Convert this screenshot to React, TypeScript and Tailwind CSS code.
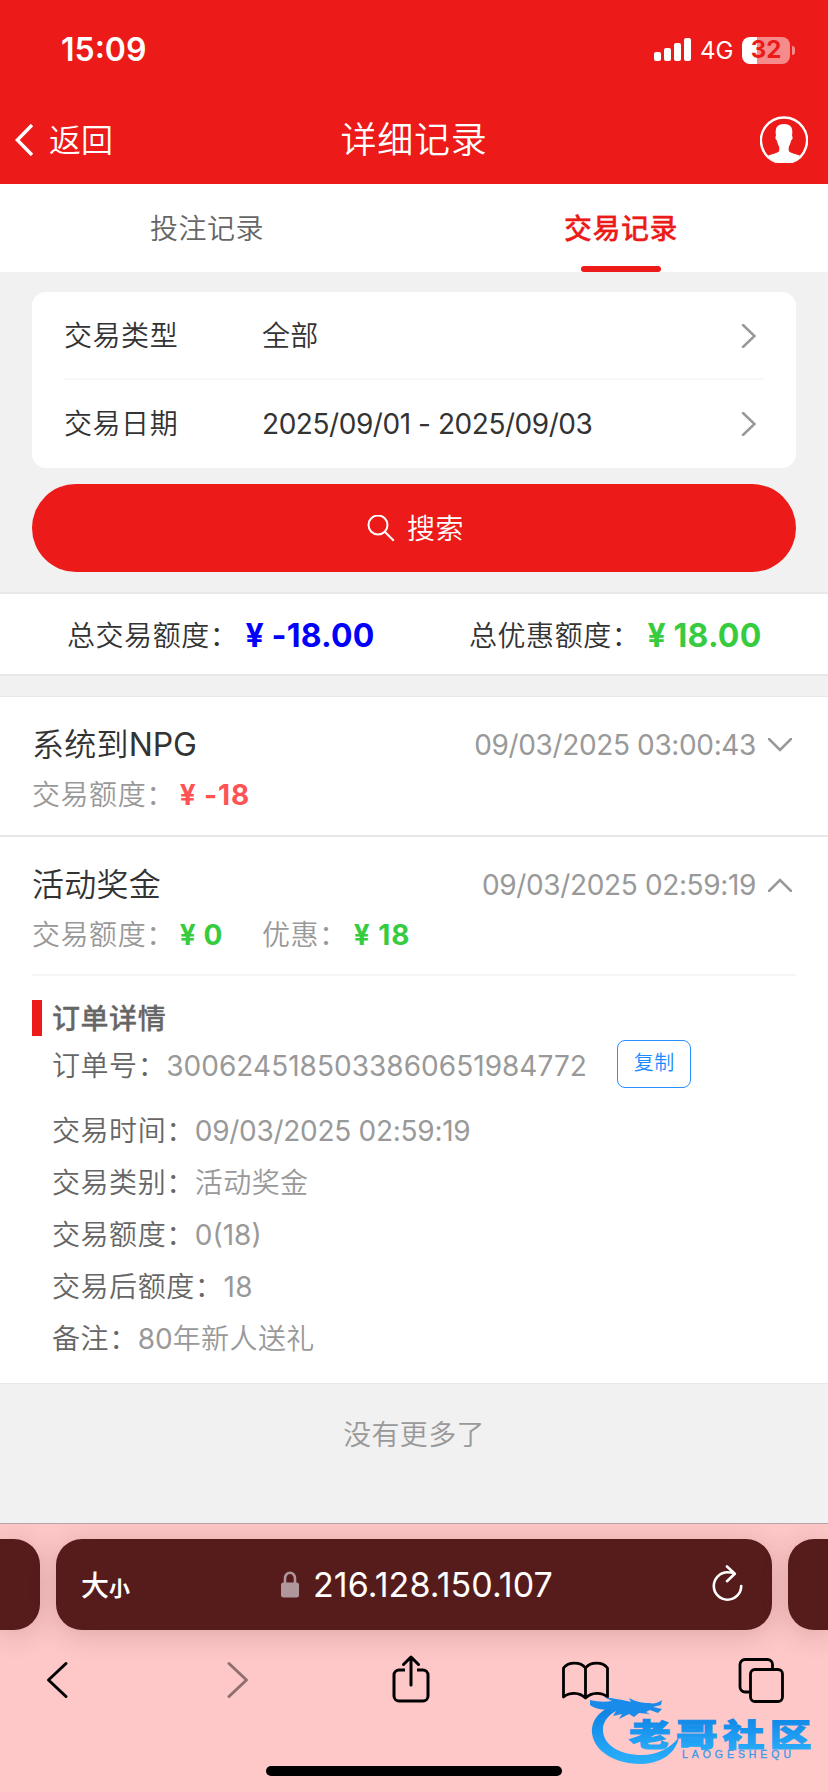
import { ReactNode } from 'react';

interface RowProps {
  label: string;
  children: ReactNode;
}

interface RecordHeadProps {
  title: ReactNode;
  time: string;
  open?: boolean;
  children: ReactNode;
}

const StatusBar = () => (
  <div className="flex h-24 items-start pl-[61px] pr-[33px] pt-[30px] text-white">
    <span className="text-[32px] font-semibold leading-10">15:09</span>
    <div className="ml-auto flex h-10 items-center">
      <svg className="mr-[9px] h-6 w-[37px]" viewBox="0 0 37 24" fill="currentColor">
        <rect x="0" y="14" width="7" height="9" rx="2" />
        <rect x="10" y="10" width="7" height="13" rx="2" />
        <rect x="20" y="5" width="7" height="18" rx="2" />
        <rect x="30" y="0" width="7" height="23" rx="2" />
      </svg>
      <span className="mr-[10px] w-8 whitespace-nowrap pt-[2px] text-2xl font-normal">4G</span>
      {/* Battery */}
      <div className="flex h-[27px] w-12 items-center justify-center rounded-lg bg-[linear-gradient(90deg,#fff_15px,#f68b8b_15px)] text-2xl font-bold text-[#ec1a18]">
        32
      </div>
      <div className="ml-[2px] h-[9px] w-[3px] rounded-r-full bg-[#f68b8b]" />
    </div>
  </div>
);

const NavBar = () => (
  <div className="grid h-22 grid-cols-3 items-center pl-[15px] pr-5 text-white">
    <div className="flex items-center gap-4">
      <svg className="h-8 w-[18px]" viewBox="0 0 18 32" fill="none" stroke="currentColor" strokeWidth="3.4">
        <path d="M17 1 2.300 16 17 31" />
      </svg>
      <span className="pt-[2px] text-[32px]">返回</span>
    </div>
    <h1 className="pl-[5px] text-center text-4xl tracking-[0.02em]">详细记录</h1>
    <svg className="ml-auto h-12 w-12" viewBox="0 0 48 48">
      <path d="M16.5 46.2A23 23 0 1 1 31.5 46.2" fill="none" stroke="currentColor" strokeWidth="2.4" />
      <path
        d="M8 39.500c4.500-1.700 9.500-2.200 11-4.300.5-1.400.4-3.200.1-4.700-1.100-1.700-1.800-4-2.200-6-1-.3-1.500-1.700-1.500-3 0-.9.300-1.300.6-1.400-.6-3-.5-7 .8-9 1.500-2.200 4-3.100 7.200-3.100s5.700.9 7.200 3.100c1.300 2 1.400 6 .8 9 .3.100.6.500.6 1.400 0 1.300-.5 2.700-1.500 3-.4 2-1.100 4.300-2.200 6-.3 1.500-.4 3.300.1 4.700 1.500 2.100 6.500 2.600 11 4.300-2.500 3.500-5.500 6-9 7.500H17c-3.500-1.500-6.500-4-9-7.500z"
        fill="currentColor"
      />
    </svg>
  </div>
);

const Tabs = () => (
  <div className="grid h-22 grid-cols-2 bg-white text-center text-[28px] leading-[84px] tracking-[0.02em]">
    <div className="pt-[3px] text-[#666]">投注记录</div>
    <div className="relative pt-[3px] font-medium text-[#ec1a18] [-webkit-text-stroke:0.3px_#ec1a18]">
      交易记录
      <div className="absolute bottom-0 left-[167px] h-[6px] w-20 rounded-full bg-[#ec1a18]" />
    </div>
  </div>
);

const FilterRow = ({ label, children }: RowProps) => (
  <div className="flex h-22 items-center text-[28px] text-[#333]">
    <span className="w-[198px] tracking-[0.02em]">{label}</span>
    {children}
    <svg className="ml-auto mr-2 h-6 w-[15px]" viewBox="0 0 15 24" fill="none" stroke="#999" strokeWidth="2.5" strokeLinecap="round">
      <path d="M2 1 13.500 12 2 23" />
    </svg>
  </div>
);

const RecordHead = ({ title, time, open, children }: RecordHeadProps) => (
  <div className="h-[138px] px-8 pt-6">
    <div className="flex h-12 items-center">
      <span className="text-[32px] tracking-[0.008em] text-[#333]">{title}</span>
      <span className="ml-auto mr-[12px] text-[28px] font-normal tracking-[-0.013em] text-[#999]">{time}</span>
      <svg className="mr-[4px] h-[14px] w-6" viewBox="0 0 24 14" fill="none" stroke="#999" strokeWidth="2.5" strokeLinecap="round">
        <path d={open ? 'M1 13 12 2l11 11' : 'm1 1 11 11L23 1'} />
      </svg>
    </div>
    <div className="flex h-[52px] items-center text-[28px] text-[#999]">{children}</div>
  </div>
);

const DetailRow = ({ label, children }: RowProps) => (
  <div className="flex h-13 items-center">
    <span className="tracking-[0.02em] text-[#666]">{label}：</span>
    <span className="tracking-[0.015em] text-[#999]">{children}</span>
  </div>
);

const Watermark = () => (
  <svg className="absolute left-[584px] top-[1688px] h-[84px] w-[236px]" viewBox="0 0 236 84">
    <defs>
      <linearGradient id="ring" x1="0" y1="0" x2="0" y2="1">
        <stop offset="0" stopColor="#0a7ee2" />
        <stop offset="1" stopColor="#2bb0fb" />
      </linearGradient>
    </defs>
    <path
      d="M36 16C17 20 7 31 8 45c2 18 22 31 50 31 20-1 34-11 37-27-8 11-22 18-37 18-23 0-38-10-39-24-1-10 7-18 20-24z"
      fill="url(#ring)"
    />
    {/* Dragon head */}
    <path
      d="M6 12c8 2 15 2 22 1l-8-4c12 2 20 3 27 5l-2-4c7 4 14 5 20 5 5 1 9 0 13-3l-1 5-8 2 9 2-4 4-8-3-4 2 4 2-11-1-5 4-5-3-10 5 3-5-9 2 3-5-7 2 2-3c-9 0-18-2-21-5z"
      fill="#1a8be8"
    />
    <g
      fill="url(#ring)"
      stroke="url(#ring)"
      strokeWidth="1.2"
      fontSize="31"
      fontWeight="900"
      fontFamily="'Noto Sans CJK SC', sans-serif"
      transform="translate(45 57.500) scale(1.34 1)"
    >
      <text x="0" y="0" letterSpacing="4">老哥社区</text>
    </g>
    <text x="98" y="70" fill="#3a98ea" fontSize="10.500" fontFamily="'Liberation Sans', sans-serif" fontWeight="400" stroke="#3a98ea" strokeWidth="0.3" textLength="109">
      LAOGESHEQU
    </text>
  </svg>
);

const BrowserBar = () => (
  <div className="h-[269px] overflow-hidden border-t border-[#b5a3a5] bg-[#fec8c8]">
    <div className="flex gap-4 pt-[15px]">
      <div className="h-[91px] w-10 rounded-r-[26px] bg-[#561c1c] shadow-[0_4px_28px_rgba(90,30,30,0.2)]" />
      <div className="grid h-[91px] w-[716px] grid-cols-[1fr_auto_1fr] items-center rounded-[26px] bg-[#561c1c] px-[25px] text-white shadow-[0_4px_28px_rgba(90,30,30,0.2)]">
        <div className="flex items-baseline pt-[2px] font-medium">
          <span className="text-[28px]">大</span>
          <span className="text-[21px] font-bold">小</span>
        </div>
        <div className="flex items-center pl-[6px]">
          <svg className="mr-[14px] h-[27px] w-[18px]" viewBox="0 0 18 27">
            <path d="M4 12V7.500a5 5.800 0 0 1 10 0V12" fill="none" stroke="#b0979b" strokeWidth="2.6" />
            <rect y="11.5" width="18" height="15" rx="2.5" fill="#b0979b" />
          </svg>
          <span className="text-[34px] font-normal tracking-[0.002em]">216.128.150.107</span>
        </div>
        <svg className="ml-auto mr-[3px] h-10 w-8" viewBox="0 0 32 40" fill="none" stroke="currentColor" strokeWidth="2.6" strokeLinecap="round" strokeLinejoin="round">
          <path d="M29.200 21A13.700 13.700 0 1 1 15.500 7.300c2.500 0 5 .3 7.300 1.400M15 1.500l7.800 7.200L15 16.200" />
        </svg>
      </div>
      <div className="h-[91px] w-10 rounded-l-[26px] bg-[#561c1c] shadow-[0_4px_28px_rgba(90,30,30,0.2)]" />
    </div>

    <div className="mt-[22px] flex justify-between pl-8 pr-[41px]">
      <svg className="h-14 w-[52px]" viewBox="0 0 52 56" fill="none" stroke="#000" strokeWidth="3" strokeLinecap="round" strokeLinejoin="round">
        <path d="M34 11.500 16.500 28 34 44.500" />
      </svg>
      <svg className="h-14 w-[52px]" viewBox="0 0 52 56" fill="none" stroke="#906f70" strokeWidth="3" strokeLinecap="round" strokeLinejoin="round">
        <path d="M21 11.500 38.500 28 21 44.500" />
      </svg>
      <svg className="h-14 w-[52px]" viewBox="0 0 52 56" fill="none" stroke="#000" strokeWidth="3" strokeLinecap="round" strokeLinejoin="round">
        <path strokeLinecap="butt" d="M21 18h-6a5 5 0 0 0-5 5v21a5 5 0 0 0 5 5h24a5 5 0 0 0 5-5V23a5 5 0 0 0-5-5h-6" />
        <path d="M27 33V5M19.500 12.500 27 5l7.500 7.500" />
      </svg>
      <svg className="h-14 w-[52px]" viewBox="0 0 52 56" fill="none" stroke="#000" strokeWidth="2.8" strokeLinejoin="round">
        <path d="M26.500 46V16c-5-6.500-17-6.500-22 0v29c6-5 16-5 22 1 6-6 16-6 22-1V16c-5-6.500-17-6.500-22 0" />
      </svg>
      <svg className="h-14 w-[52px]" viewBox="0 0 52 56" fill="none" stroke="#000" strokeWidth="2.8">
        <path d="M14.500 40H10a5 5 0 0 1-5-5V12.500a5 5 0 0 1 5-5h22.500a5 5 0 0 1 5 5V17" />
        <rect x="15.5" y="17.5" width="32" height="32" rx="4.5" />
      </svg>
    </div>

    <div className="mx-auto mt-[58px] h-[10px] w-[296px] rounded-full bg-black" />
  </div>
);

const App = () => {
  return (
    <div className="relative flex h-[1792px] w-[828px] flex-col overflow-hidden bg-[#f1f1f1] font-['Inter','Noto_Sans_CJK_SC',sans-serif] font-[350]">
      <header className="bg-[#ec1a18]">
        <StatusBar />
        <NavBar />
      </header>
      <Tabs />

      {/* Filters */}
      <div className="mx-8 mt-5 rounded-[14px] bg-white px-8">
        <FilterRow label="交易类型">
          <span className="tracking-[0.01em]">全部</span>
        </FilterRow>
        <div className="-mt-[2px] h-[2px] bg-[#f8f8f8]" />
        <FilterRow label="交易日期">
          <span className="font-normal tracking-[-0.016em]">2025/09/01 - 2025/09/03</span>
        </FilterRow>
      </div>
      <button className="mx-8 mt-4 flex h-22 items-center justify-center rounded-full bg-[#ec1a18] pl-[3px] pt-[2px] text-[28px] tracking-[0.02em] text-white">
        <svg className="mr-3 h-7 w-7" viewBox="0 0 28 28" fill="none" stroke="currentColor" strokeWidth="2">
          <circle cx="11" cy="10" r="9.5" />
          <path d="m17.800 16.800 9 9" />
        </svg>
        搜索
      </button>

      {/* Totals */}
      <div className="mt-5 flex h-[84px] items-center border-y-2 border-[#e8e8e8] bg-white pl-[67px] pt-[3px] text-[28px] text-[#333]">
        <div className="flex w-[402px] items-center">
          <span className="tracking-[0.02em]">总交易额度：</span>
          <span className="ml-[7px] text-[32px] font-bold tracking-[0.006em] text-[#0000fa]">¥ -18.00</span>
        </div>
        <span className="tracking-[0.02em]">总优惠额度：</span>
        <span className="ml-[7px] text-[32px] font-bold tracking-[0.006em] text-[#37cc3f]">¥ 18.00</span>
      </div>

      {/* Records */}
      <div className="mt-5 border-y border-[#e8e8ea] bg-white">
        <RecordHead title={<>系统到<span className="font-normal tracking-[-0.005em]">NPG</span></>} time="09/03/2025 03:00:43">
          <span className="tracking-[0.02em]">交易额度：</span>
          <span className="ml-[5px] font-bold tracking-[0.03em] text-[#ff5353]">¥ -18</span>
        </RecordHead>
        <div className="h-[2px] bg-[#e8e8ea]" />
        <RecordHead title="活动奖金" time="09/03/2025 02:59:19" open>
          <div className="flex w-[230px] items-center">
            <span className="tracking-[0.02em]">交易额度：</span>
            <span className="ml-[5px] font-bold tracking-[0.02em] text-[#37cc3f]">¥ 0</span>
          </div>
          <span className="tracking-[0.02em]">优惠：</span>
          <span className="ml-[6px] font-bold tracking-[0.035em] text-[#37cc3f]">¥ 18</span>
        </RecordHead>
        <div className="mx-8 -mt-px h-[2px] bg-[#f5f5f5]" />

        <div className="h-[407px] px-8 pt-6 text-[28px]">
          <div className="flex h-9 items-center border-l-[10px] border-[#ec1a18] pl-[10px] pt-px font-medium tracking-[0.02em] text-[#666] [-webkit-text-stroke:0.3px_#666]">
            订单详情
          </div>
          <div className="pl-5">
            <div className="mb-[17px] flex h-[52px] items-center pt-1">
              <span className="pt-1 tracking-[0.02em] text-[#666]">订单号：</span>
              <span className="w-[420px] pt-1 font-normal tracking-[0.001em] text-[#999]">3006245185033860651984772</span>
              <button className="ml-[31px] h-12 w-[74px] rounded-lg border border-[#2a8fff] pb-[2px] text-xl tracking-[0.02em] text-[#1a8aff]">
                复制
              </button>
            </div>
            <DetailRow label="交易时间">
              <span className="font-normal tracking-[-0.01em]">09/03/2025 02:59:19</span>
            </DetailRow>
            <DetailRow label="交易类别">活动奖金</DetailRow>
            <DetailRow label="交易额度">
              <span className="font-normal tracking-normal">0(18)</span>
            </DetailRow>
            <DetailRow label="交易后额度">
              <span className="font-normal">18</span>
            </DetailRow>
            <DetailRow label="备注">
              <span className="font-normal tracking-normal">80</span>年新人送礼
            </DetailRow>
          </div>
        </div>
      </div>

      <div className="flex-1 pt-[30px] text-center text-[28px] tracking-[0.01em] text-[#999]">没有更多了</div>

      <BrowserBar />
      <Watermark />
    </div>
  );
};

export default App;
